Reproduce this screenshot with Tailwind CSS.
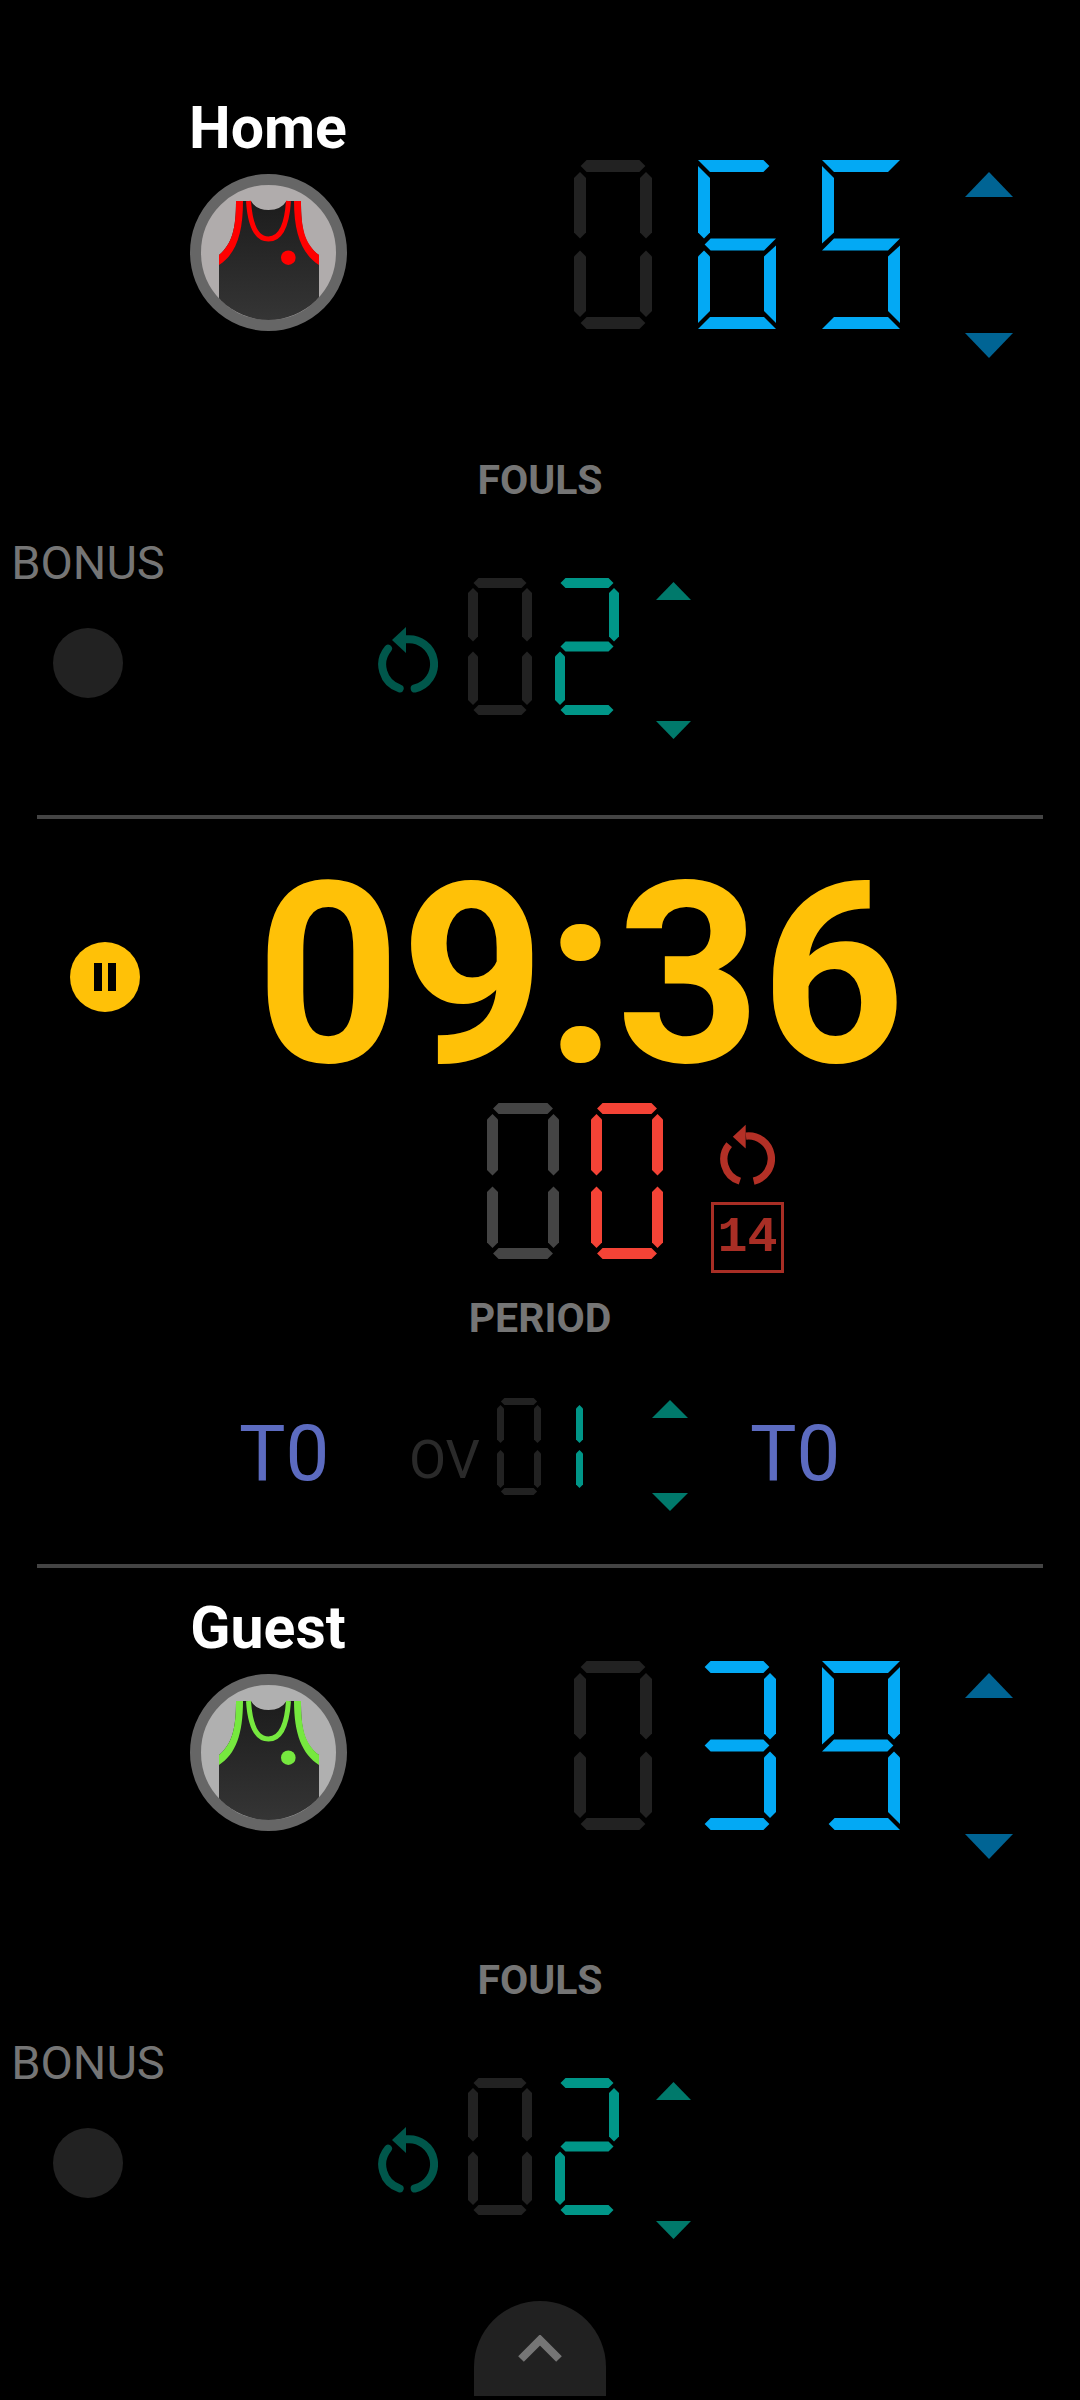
<!DOCTYPE html>
<html lang="en">
<head>
  <meta charset="UTF-8" />
  <title>Scoreboard</title>
  <script src="https://cdn.jsdelivr.net/npm/@tailwindcss/browser@4"></script>
</head>
<body class="bg-black">
  <div class="w-[1080px] h-[2400px] overflow-hidden flex flex-col bg-black font-['Roboto',sans-serif]">
    <div id="home" class="pt-[100px]"></div>
    <div class="mx-[37px] mt-[76px] h-[4px] bg-[#444]"></div>

    <!-- clock -->
    <div class="flex items-center h-[284px]">
      <button class="ml-[70px] w-[70px] h-[70px] mt-[32px] rounded-full bg-[#ffc107] flex items-center justify-center gap-[6px]">
        <span class="w-[8px] h-[28px] bg-black"></span>
        <span class="w-[8px] h-[28px] bg-black"></span>
      </button>
      <div class="ml-[116px] mt-[30px] text-[252px] leading-[284px] font-bold text-[#ffc107]">09:36</div>
    </div>

    <!-- shot clock -->
    <div class="flex items-start pl-[487px]">
      <div id="shot" class="flex gap-[32px]"></div>
      <div class="ml-[48px] flex flex-col items-center">
        <div id="shotReset" class="mt-[20px]"></div>
        <div class="mt-[15px] w-[73px] h-[71px] border-[3px] border-[#a82e25] flex items-center justify-center text-[50px] font-bold text-[#a82e25] font-['Liberation_Mono',monospace]">14</div>
      </div>
    </div>

    <div class="mt-[25px] h-[40px] leading-[40px] text-center text-[41px] font-bold text-[#757575]">PERIOD</div>

    <!-- period row -->
    <div class="mt-[60px] flex items-start">
      <div class="ml-[239px] w-[170px] mt-[12px] text-[78px] leading-[88px] text-[#5c6bc0]">T0</div>
      <div class="w-[88px] mt-[32px] text-[54px] leading-[60px] text-[#2a2a2a]">OV</div>
      <div id="period" class="flex -space-x-[2px]"></div>
      <div id="periodArrows" class="ml-[69px] mt-[2px]"></div>
      <div class="ml-[62px] mt-[12px] text-[78px] leading-[88px] text-[#5c6bc0]">T0</div>
    </div>

    <div class="mx-[37px] mt-[53px] h-[4px] bg-[#444]"></div>
    <div id="guest" class="pt-[32px]"></div>

    <div class="mt-[62px] mx-auto w-[132px] h-[95px] rounded-t-[66px] bg-[#212121] flex justify-center pt-[34px]">
      <svg width="44" height="28" viewBox="0 0 44 28"><path d="M3 24 L22 5 L41 24" fill="none" stroke="#757575" stroke-width="8"/></svg>
    </div>
  </div>

  <script>
    const LIT = {
      "0": "abcdef", "1": "bc", "2": "abged", "3": "abgcd", "5": "afgcd", "6": "afgedc", "9": "abcdfg"
    };
    // m = mitred end, p = pointed end (start, end) - only the big score digits use mitres
    const MITRES = {
      "5": { a: "mm", f: "mm", g: "mm", c: "mm", d: "mm" },
      "6": { a: "mp", f: "mp", g: "pm", e: "pm", c: "mm", d: "mm" },
      "9": { a: "mm", f: "mm", b: "mp", g: "mp", c: "pm", d: "pm" }
    };

    function segPoints(name, ends, w, h, t) {
      const p = t * 0.55, m = h / 2, c = p + t / 2, k = t / 2;
      const [s, e] = ends;
      if (name === "a") return [
        ...(s === "m" ? [[0, 0]] : [[c, 0]]),
        ...(e === "m" ? [[w, 0], [w - t, t]] : [[w - c, 0], [w - p, k], [w - c, t]]),
        ...(s === "m" ? [[t, t]] : [[c, t], [p, k]])
      ];
      if (name === "d") return [
        ...(s === "m" ? [[t, h - t]] : [[c, h - t]]),
        ...(e === "m" ? [[w - t, h - t], [w, h]] : [[w - c, h - t], [w - p, h - k], [w - c, h]]),
        ...(s === "m" ? [[0, h]] : [[c, h], [p, h - k]])
      ];
      if (name === "g") return [
        ...(s === "m" ? [[t, m - k]] : [[c, m - k]]),
        ...(e === "m" ? [[w, m - k], [w - t, m + k]] : [[w - c, m - k], [w - p, m], [w - c, m + k]]),
        ...(s === "m" ? [[0, m + k]] : [[c, m + k], [p, m]])
      ];
      // verticals, drawn on the left and mirrored for b and c
      const upper = name === "f" || name === "b";
      const pts = [];
      if (upper) {
        if (s === "m") pts.push([0, k], [t, t + k]);
        else pts.push([k, t], [t, t + k]);
        if (e === "m") pts.push([t, m - t], [0, m - 1]);
        else pts.push([t, m - t], [k, m - k], [0, m - t]);
        if (s !== "m") pts.push([0, t + k]);
      } else {
        if (s === "m") pts.push([0, m + 1], [t, m + t]);
        else pts.push([k, m + k], [t, m + t]);
        if (e === "m") pts.push([t, h - t - k], [0, h - k]);
        else pts.push([t, h - t - k], [k, h - t], [0, h - t - k]);
        if (s !== "m") pts.push([0, m + t]);
      }
      const mirror = name === "b" || name === "c";
      return pts.map(([x, y]) => [mirror ? w - x : x, y]);
    }

    function digit(value, w, h, t, fill, mitre) {
      const specs = (mitre && MITRES[value]) || {};
      const polys = LIT[value].split("").map(name => {
        const pts = segPoints(name, specs[name] || "pp", w, h, t);
        return `<polygon points="${pts.map(q => q.join(",")).join(" ")}" />`;
      }).join("");
      return `<svg width="${w}" height="${h}" viewBox="0 0 ${w} ${h}" class="block ${fill}">${polys}</svg>`;
    }

    function reset(width, height, color, cap) {
      return `<svg width="${width}" height="${height}" viewBox="0 0 60 66" class="block" fill="none" stroke="${color}" stroke-width="8" stroke-linecap="${cap}">
        <path d="M28.3 12.3 A25 25 0 0 1 36.7 61.5" />
        <path d="M10 21.7 A25 25 0 0 0 21.7 61.5" />
        <polygon points="28,0 14,13 28,26" fill="${color}" stroke="none" />
      </svg>`;
    }

    function arrows(w, h, gap, color) {
      return `<div class="flex flex-col" style="gap:${gap}px">
        <svg width="${w}" height="${h}" class="block"><polygon points="${w / 2},0 ${w},${h} 0,${h}" fill="${color}" /></svg>
        <svg width="${w}" height="${h}" class="block"><polygon points="0,0 ${w},0 ${w / 2},${h}" fill="${color}" /></svg>
      </div>`;
    }

    function jersey(id, bg, trim) {
      return `<svg width="157" height="157" viewBox="0 0 157 157" class="block">
        <defs>
          <clipPath id="clip${id}"><circle cx="78.5" cy="78.5" r="67.5" /></clipPath>
          <linearGradient id="grad${id}" x1="0" y1="0" x2="0" y2="1">
            <stop offset="0" stop-color="#1c1c1c" /><stop offset="1" stop-color="#3a3a3a" />
          </linearGradient>
        </defs>
        <circle cx="78.5" cy="78.5" r="73" fill="${bg}" stroke="#666" stroke-width="11" />
        <g clip-path="url(#clip${id})">
          <path d="M46 27 H61 Q66 36 78.5 36 Q91 36 96.5 27 H111 C111 55 114 70 129 81 V170 H29 V81 C42 70 46 55 46 27 Z" fill="url(#grad${id})" />
          <path d="M46 27 C46 55 42 70 29 81 V91 C46 80 53 60 53 27 Z" fill="${trim}" />
          <path d="M111 27 C111 55 115 70 129 81 V91 C112 80 104 60 104 27 Z" fill="${trim}" />
          <path d="M58.5 27 C60 50 66 65 78.5 65 C91 65 97 50 98.5 27" fill="none" stroke="${trim}" stroke-width="5" />
          <circle cx="98.3" cy="83.7" r="7.3" fill="${trim}" />
        </g>
      </svg>`;
    }

    function team(id, name, trim, bg, score, fouls, scoreTop, foulsTop) {
      return `
        <div class="flex items-start">
          <div class="w-[536px] flex flex-col items-center">
            <div class="h-[56px] leading-[56px] text-[59px] font-bold text-white">${name}</div>
            <div class="mt-[18px]">${jersey(id, bg, trim)}</div>
          </div>
          <div class="ml-[38px] ${scoreTop} flex items-start">
            <div class="flex gap-[46px]">
              ${digit(score[0], 78, 169, 12, "fill-[#222222]", false)}
              ${digit(score[1], 78, 169, 12, "fill-[#03a9f4]", true)}
              ${digit(score[2], 78, 169, 12, "fill-[#03a9f4]", true)}
            </div>
            <div class="ml-[65px] mt-[12px]">${arrows(48, 25, 136, "#006494")}</div>
          </div>
        </div>
        <div class="${foulsTop} h-[40px] leading-[40px] text-center text-[41px] font-bold text-[#757575]">FOULS</div>
        <div class="flex items-start">
          <div class="w-[176px] pt-[37px] flex flex-col items-center">
            <div class="h-[52px] leading-[52px] text-[47px] text-[#757575]">BONUS</div>
            <div class="mt-[39px] w-[70px] h-[70px] rounded-full bg-[#222222]"></div>
          </div>
          <div class="ml-[202px] mt-[127px]">${reset(60, 66, "#00574b", "round")}</div>
          <div class="ml-[30px] mt-[78px] flex gap-[23px]">
            ${digit(fouls[0], 64, 137, 10, "fill-[#222222]", false)}
            ${digit(fouls[1], 64, 137, 10, "fill-[#009688]", false)}
          </div>
          <div class="ml-[37px] mt-[82px]">${arrows(35, 18, 121, "#00796b")}</div>
        </div>`;
    }

    document.getElementById("home").innerHTML = team("Home", "Home", "#ff0000", "#b0acac", "065", "02", "mt-[60px]", "mt-[102px]");
    document.getElementById("guest").innerHTML = team("Guest", "Guest", "#76e83f", "#b0b0b0", "039", "02", "mt-[61px]", "mt-[101px]");
    document.getElementById("shot").innerHTML =
      digit("0", 72, 156, 11, "fill-[#444444]", false) + digit("0", 72, 156, 11, "fill-[#f44336]", false);
    document.getElementById("shotReset").innerHTML = reset(55, 64, "#b33026", "butt");
    document.getElementById("period").innerHTML =
      digit("0", 44, 97, 7, "fill-[#222222]", false) + digit("1", 44, 97, 7, "fill-[#009688]", false);
    document.getElementById("periodArrows").innerHTML = arrows(36, 18, 75, "#00796b");
  </script>
</body>
</html>
